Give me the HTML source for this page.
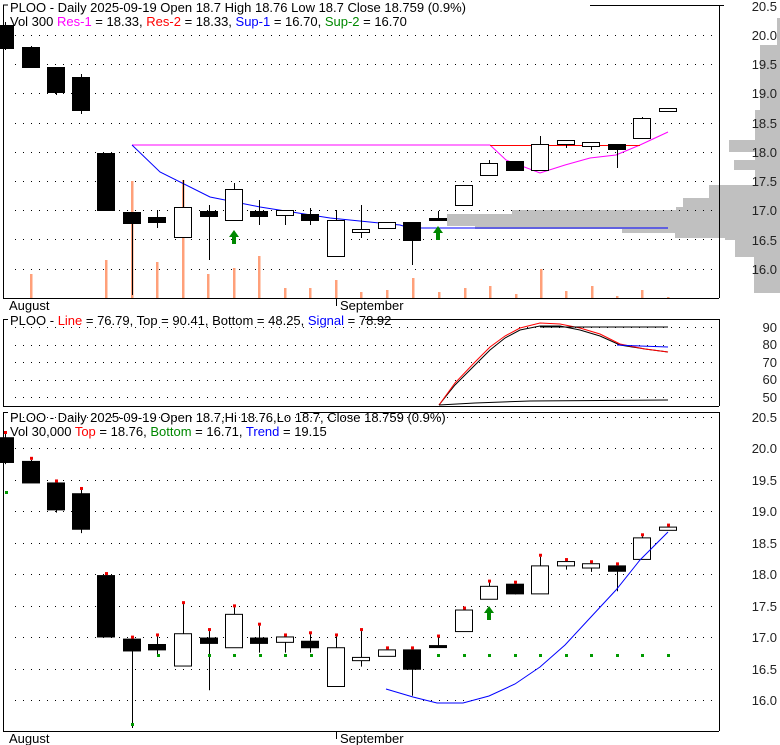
<!DOCTYPE html>
<html><head><meta charset="utf-8"><style>
html,body{margin:0;padding:0;background:#fff;}
svg{display:block;font-family:"Liberation Sans",sans-serif;}
</style></head><body>
<svg id="s" width="780" height="745" xmlns="http://www.w3.org/2000/svg">
<g id="prof" fill="#c0c0c0">
<rect x="777" y="18" width="3" height="27"/>
<rect x="760" y="45" width="20" height="65"/>
<rect x="755" y="110" width="25" height="30"/>
<rect x="729" y="140" width="51" height="12"/>
<rect x="755" y="152" width="25" height="8"/>
<rect x="734" y="160" width="46" height="10"/>
<rect x="755" y="170" width="25" height="15"/>
<rect x="709" y="185" width="71" height="13"/>
<rect x="683" y="198" width="97" height="9"/>
<rect x="676" y="207" width="104" height="4"/>
<rect x="512" y="210" width="268" height="4"/>
<rect x="447" y="214" width="333" height="12"/>
<rect x="475" y="226" width="305" height="3"/>
<rect x="622" y="229" width="158" height="4"/>
<rect x="675" y="233" width="105" height="5"/>
<rect x="725" y="238" width="55" height="2"/>
<rect x="735" y="240" width="45" height="17"/>
<rect x="754" y="257" width="26" height="36"/>
</g>
<g id="g"></g>
<g font-size="13" fill="#222" text-anchor="end">
<text x="777" y="11">20.5</text><text x="777" y="40">20.0</text><text x="777" y="69">19.5</text><text x="777" y="98">19.0</text><text x="777" y="128">18.5</text><text x="777" y="157">18.0</text><text x="777" y="186">17.5</text><text x="777" y="215">17.0</text><text x="777" y="245">16.5</text><text x="777" y="274">16.0</text>
<text x="777" y="332">90</text><text x="777" y="349">80</text><text x="777" y="367">70</text><text x="777" y="384">60</text><text x="777" y="402">50</text>
<text x="777" y="422">20.5</text><text x="777" y="453">20.0</text><text x="777" y="485">19.5</text><text x="777" y="516">19.0</text><text x="777" y="548">18.5</text><text x="777" y="579">18.0</text><text x="777" y="611">17.5</text><text x="777" y="642">17.0</text><text x="777" y="674">16.5</text><text x="777" y="705">16.0</text>
</g>
<g font-size="13" fill="#000">
<text x="10" y="12">PLOO - Daily 2025-09-19 Open 18.7  High 18.76  Low 18.7  Close 18.759 (0.9%)</text>
<text x="10" y="26">Vol 300 <tspan fill="#f0f">Res-1</tspan> = 18.33, <tspan fill="#f00">Res-2</tspan> = 18.33, <tspan fill="#00f">Sup-1</tspan> = 16.70, <tspan fill="#080">Sup-2</tspan> = 16.70</text>
<text x="9" y="310">August</text>
<text x="340" y="310">September</text>
<text x="10" y="325">PLOO - <tspan fill="#f00">Line</tspan> = 76.79, Top = 90.41, Bottom = 48.25, <tspan fill="#00f">Signal</tspan> = 78.92</text>
<text x="10" y="422">PLOO - Daily 2025-09-19 Open 18.7,Hi 18.76,Lo 18.7, Close 18.759 (0.9%)</text>
<text x="10" y="436">Vol 30,000 <tspan fill="#f00">Top</tspan> = 18.76, <tspan fill="#080">Bottom</tspan> = 16.71, <tspan fill="#00f">Trend</tspan> = 19.15</text>
<text x="9" y="743">August</text>
<text x="340" y="743">September</text>
</g>
</svg>
<script>
var g=document.getElementById('g'),h='';
function L(x1,y1,x2,y2,c,w,d){h+='<line x1="'+x1+'" y1="'+y1+'" x2="'+x2+'" y2="'+y2+'" stroke="'+c+'" stroke-width="'+(w||1)+'"'+(d?' stroke-dasharray="'+d+'"':'')+'/>';}
function P(pts,c){h+='<polyline fill="none" stroke="'+c+'" stroke-width="1" points="'+pts+'"/>';}
function R(x,y,w,hh,f,s){h+='<rect x="'+x+'" y="'+y+'" width="'+w+'" height="'+hh+'" fill="'+f+'"'+(s?' stroke="'+s+'"':'')+'/>';}
for(var i=0;i<9;i++){var y=35+i*29.2;L(15,Math.round(y)+.5,719,Math.round(y)+.5,'#000',1,'1 7');}
for(var i=0;i<5;i++){var y=327+i*17.5;L(15,Math.round(y)+.5,719,Math.round(y)+.5,'#000',1,'1 7');}
for(var i=0;i<10;i++){var y=417+i*31.45;L(15,Math.round(y)+.5,719,Math.round(y)+.5,'#000',1,'1 7');}
L(3.5,5,3.5,298,'#000');L(3,5,8,5,'#000');L(3,298.5,719,298.5,'#000');L(719.5,5,719.5,298,'#000');L(590,5.5,719,5.5,'#000');L(719,5.5,724,5.5,'#000');
L(3.5,319,3.5,406,'#000');L(3,319.5,8,319.5,'#000');L(365,319.5,719,319.5,'#000');L(3,406.5,719,406.5,'#000');L(719.5,319,719.5,406,'#000');
L(3.5,412,3.5,732,'#000');L(3,412.5,8,412.5,'#000');L(300,412.5,719,412.5,'#000');L(3,731.5,719,731.5,'#000');L(719.5,412,719.5,731,'#000');
L(336.5,299,336.5,306,'#000');L(336.5,732,336.5,739,'#000');
var vol=[[31,274],[106,260],[132,181],[157,262],[183,180],[208,274],[234,268],[259,256],[285,288],[310,288],[336,280],[361,292],[387,290],[413,278],[439,292],[465,288],[490,286],[516,294],[541,269],[566,291],[592,286],[617,296],[642,290],[668,297]];
vol.forEach(function(v){R(v[0]-1,v[1],2.5,298-v[1],'#ffa07a');});
var C=[[5,25,48,22,50,1],[31,47,67,46,67,1],[56,67,92,67,95,1],[81,77,110,74,114,1],[106,153,210,153,210,1],[132,212,223,212,295,1],[157,217,222,210,228,1],[183,207,237,180,237,0],[209,211,216,205,260,1],[234,189,220,183,220,0],[259,211,216,200,225,1],[285,210,215,210,225,0],[310,214,220,208,225,1],[336,220,256,210,256,0],[361,229,232,205,238,0],[387,222,228,222,228,0],[412,222,240,222,265,1],[438,218,219,211,219,1],[464,185,205,185,205,0],[489,163,175,160,175,0],[515,161,170,161,171,1],[540,144,170,136,170,0],[566,140,144,140,148,0],[591,142,146,142,150,0],[617,144,149,144,168,1],[642,118,138,117,138,0],[668,108,111,108,111,0]];
function M(y){return 700-(269-y)*1.077;}
P('132,145 490,145 506,160 540,173 565,165 590,158 616,155 640,145 668,132','#f0f');
L(490,145.5,640,145.5,'#f00');
P('132,145 160,172 210,197 260,207 330,218 400,225 410,228 668,228','#00f');
function cand(f,dots){C.forEach(function(c){var x=c[0],o=f(c[1]),cl=f(c[2]),hi=f(c[3]),lo=f(c[4]);var t=Math.min(o,cl),b=Math.max(o,cl);if(b-t<2)b=t+2;
L(x+.5,hi,x+.5,lo,'#000');R(x-8.5,t+.5,17,b-t,c[5]?'#000':'#fff','#000');if(dots){R(x-1,hi-3,3,3,'#e00');}});}
cand(function(y){return y;},false);
cand(M,true);
function arrow(x,y){h+='<polygon fill="#080" points="'+x+','+y+' '+(x+5)+','+(y+7)+' '+(x+2)+','+(y+7)+' '+(x+2)+','+(y+14)+' '+(x-2)+','+(y+14)+' '+(x-2)+','+(y+7)+' '+(x-5)+','+(y+7)+'"/>';}
arrow(234,230);arrow(438,226);arrow(489,606);
P('439,405 455,385 475,365 490,350 505,338 520,330 540,326 560,326 580,330 600,336 620,345 645,349 668,352','#000');
P('439,405 455,383 475,362 490,347 505,336 520,328 540,323 560,324 580,328 600,334 620,344 645,349 668,352','#f00');
P('540,327 668,327','#000');
P('617,345 640,346 668,347','#00f');
P('439,405 475,403 530,401 668,400','#000');
[158,209,234,260,285,311,438,464,489,515,540,566,591,617,642,668].forEach(function(x){R(x-1,654,3,3,'#090');});
R(131,723,3,3,'#090');R(5,491,3,3,'#090');
P('386,689 413,697 437,703 463,703 489,696 515,684 540,667 565,645 590,618 616,590 640,560 668,532','#00f');
g.innerHTML=h;
</script>
</body></html>
